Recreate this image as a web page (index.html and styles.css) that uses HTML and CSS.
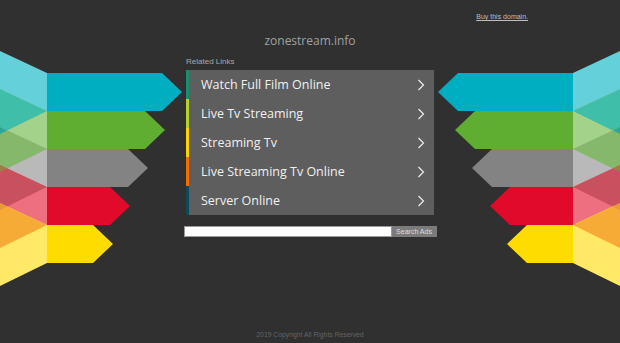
FILE: index.html
```html
<!DOCTYPE html>
<html>
<head>
    <title>zonestream.info</title>
    <link rel="stylesheet" href="styles.css">
</head>
<body>
    <div class="page">
        <div class="topbar">
            <a href="#" class="buy">Buy this domain.</a>
        </div>

        <div class="main">
            <svg class="ribbon" width="183" height="270" viewBox="0 30 183 270">
                <!-- folds -->
                <polygon points="0,51 47,73 47,111 0,134" fill="#64d0d9"/>
                <polygon points="0,89 47,111 47,149 0,172" fill="#a3d28a"/>
                <polygon points="0,127 47,149 47,187 0,210" fill="#b9b9b9"/>
                <polygon points="0,165 47,187 47,225 0,248" fill="#ee6f80"/>
                <polygon points="0,203 47,225 47,263 0,286" fill="#ffe966"/>
                <!-- overlaps -->
                <polygon points="47,111 0,89 0,134" fill="#3fbea9"/>
                <polygon points="47,149 0,127 0,172" fill="#86b86b"/>
                <polygon points="47,187 0,165 0,210" fill="#c9515f"/>
                <polygon points="47,225 0,203 0,248" fill="#f6ab37"/>
                <polygon points="0,127 0,134 7,130.5" fill="#2aa79c"/>
                <polygon points="0,165 0,172 7,168.5" fill="#a07b4a"/>
                <polygon points="0,203 0,210 7,206.5" fill="#e8973a"/>
                <!-- arrows -->
                <polygon points="47,73 162,73 182,92 162,111 47,111" fill="#00aec1"/>
                <polygon points="47,111 145,111 165,130 145,149 47,149" fill="#5fae31"/>
                <polygon points="47,149 128,149 148,168 128,187 47,187" fill="#838383"/>
                <polygon points="47,187 110,187 130,206 110,225 47,225" fill="#e10a2b"/>
                <polygon points="47,225 93,225 113,244 93,263 47,263" fill="#ffdc00"/>
            </svg>

            <div class="center">
                <h1 class="domain">zonestream.info</h1>
                <div class="related">Related Links</div>
                <ul class="links">
                    <li class="link bar-1"><a href="#">Watch Full Film Online</a>
                        <svg class="chev" width="8" height="12" viewBox="0 0 8 12"><path d="M1.5 1 L6.5 6 L1.5 11"/></svg></li>
                    <li class="link bar-2"><a href="#">Live Tv Streaming</a>
                        <svg class="chev" width="8" height="12" viewBox="0 0 8 12"><path d="M1.5 1 L6.5 6 L1.5 11"/></svg></li>
                    <li class="link bar-3"><a href="#">Streaming Tv</a>
                        <svg class="chev" width="8" height="12" viewBox="0 0 8 12"><path d="M1.5 1 L6.5 6 L1.5 11"/></svg></li>
                    <li class="link bar-4"><a href="#">Live Streaming Tv Online</a>
                        <svg class="chev" width="8" height="12" viewBox="0 0 8 12"><path d="M1.5 1 L6.5 6 L1.5 11"/></svg></li>
                    <li class="link bar-5"><a href="#">Server Online</a>
                        <svg class="chev" width="8" height="12" viewBox="0 0 8 12"><path d="M1.5 1 L6.5 6 L1.5 11"/></svg></li>
                </ul>
                <form class="search">
                    <input type="text" class="search-input">
                    <button type="button" class="search-btn">Search Ads</button>
                </form>
            </div>

            <svg class="ribbon flip" width="183" height="270" viewBox="0 30 183 270">
                <polygon points="0,51 47,73 47,111 0,134" fill="#64d0d9"/>
                <polygon points="0,89 47,111 47,149 0,172" fill="#a3d28a"/>
                <polygon points="0,127 47,149 47,187 0,210" fill="#b9b9b9"/>
                <polygon points="0,165 47,187 47,225 0,248" fill="#ee6f80"/>
                <polygon points="0,203 47,225 47,263 0,286" fill="#ffe966"/>
                <polygon points="47,111 0,89 0,134" fill="#3fbea9"/>
                <polygon points="47,149 0,127 0,172" fill="#86b86b"/>
                <polygon points="47,187 0,165 0,210" fill="#c9515f"/>
                <polygon points="47,225 0,203 0,248" fill="#f6ab37"/>
                <polygon points="0,127 0,134 7,130.5" fill="#2aa79c"/>
                <polygon points="0,165 0,172 7,168.5" fill="#a07b4a"/>
                <polygon points="0,203 0,210 7,206.5" fill="#e8973a"/>
                <polygon points="47,73 162,73 182,92 162,111 47,111" fill="#00aec1"/>
                <polygon points="47,111 145,111 165,130 145,149 47,149" fill="#5fae31"/>
                <polygon points="47,149 128,149 148,168 128,187 47,187" fill="#838383"/>
                <polygon points="47,187 110,187 130,206 110,225 47,225" fill="#e10a2b"/>
                <polygon points="47,225 93,225 113,244 93,263 47,263" fill="#ffdc00"/>
            </svg>
        </div>

        <footer class="footer">2019 Copyright All Rights Reserved</footer>
    </div>
</body>
</html>
```

FILE: styles.css
```css
body {
    margin: 0;
    background-color: #303030;
    font-family: "Liberation Sans", Arial, sans-serif;
}
.page {
    display: flex;
    flex-direction: column;
    height: 343px;
    overflow: hidden;
}
.topbar {
    display: flex;
    justify-content: flex-end;
    height: 30px;
    padding-right: 92px;
    box-sizing: border-box;
    padding-top: 12px;
}
.buy {
    color: #bdbdbd;
    font-size: 7px;
    line-height: 10px;
    text-decoration: underline;
}
.main {
    display: grid;
    grid-template-columns: 183px 254px 183px;
}
.ribbon {
    display: block;
}
.flip {
    transform: scaleX(-1);
}
.center {
    display: flex;
    flex-direction: column;
}
.domain {
    margin: 3px 0 0;
    text-align: center;
    font-family: "Open Sans", sans-serif;
    font-weight: normal;
    font-size: 12px;
    line-height: 16px;
    color: #a0a0a0;
}
.related {
    margin: 9px 0 0 3px;
    font-size: 8px;
    line-height: 8px;
    color: #a8a8a8;
}
.links {
    list-style-type: none;
    margin: 4px 0 0 3px;
    padding: 0;
    width: 248px;
    background-color: #5e5e5e;
}
.link {
    display: flex;
    align-items: center;
    justify-content: space-between;
    height: 29px;
    border-left: 3px solid #1a8c70;
    padding: 0 9px 0 12px;
}
.link a {
    color: #f0f0f0;
    text-decoration: none;
    font-family: "Open Sans", sans-serif;
    font-size: 12.5px;
}
.bar-1 { border-left-color: #1a8c70; }
.bar-2 { border-left-color: #b8d02a; }
.bar-3 { border-left-color: #ffd200; }
.bar-4 { border-left-color: #f26c00; }
.bar-5 { border-left-color: #0e4a5a; }
.chev path {
    fill: none;
    stroke: #eeeeee;
    stroke-width: 1.2;
}
.search {
    display: flex;
    margin: 11px 0 0 0;
    padding-left: 0.5px;
}
.search-input {
    width: 208px;
    height: 11px;
    box-sizing: border-box;
    border: 1px solid #9a9a9a;
    background-color: #ffffff;
    margin: 0;
    padding: 0;
}
.search-btn {
    width: 45px;
    height: 11px;
    box-sizing: border-box;
    border: none;
    margin: 0;
    padding: 0;
    background-color: #7b7b7b;
    color: #dddddd;
    font-family: "Liberation Sans", Arial, sans-serif;
    font-size: 7px;
    line-height: 11px;
}
.footer {
    margin-top: auto;
    padding-bottom: 4px;
    text-align: center;
    font-size: 6.8px;
    line-height: 8px;
    color: #646464;
}
```
